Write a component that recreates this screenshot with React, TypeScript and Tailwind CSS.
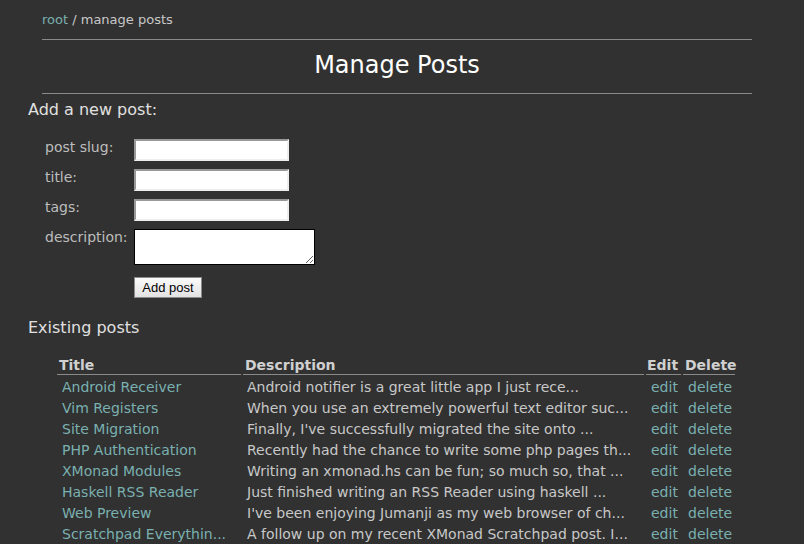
import React from "react";

const posts: [string, string][] = [
  ["Android Receiver", "Android notifier is a great little app I just rece..."],
  ["Vim Registers", "When you use an extremely powerful text editor suc..."],
  ["Site Migration", "Finally, I've successfully migrated the site onto ..."],
  ["PHP Authentication", "Recently had the chance to write some php pages th..."],
  ["XMonad Modules", "Writing an xmonad.hs can be fun; so much so, that ..."],
  ["Haskell RSS Reader", "Just finished writing an RSS Reader using haskell ..."],
  ["Web Preview", "I've been enjoying Jumanji as my web browser of ch..."],
  ["Scratchpad Everythin...", "A follow up on my recent XMonad Scratchpad post. I..."],
];

const inputCls =
  "w-[155px] h-[22px] bg-white border-2 border-t-[#999] border-l-[#999] border-b-[#eee] border-r-[#eee] outline-none";

export default function App() {
  return (
    <div
      className="min-h-screen bg-[#313131] px-[28px] text-[#c8c8c8]"
      style={{ fontFamily: '"DejaVu Sans", Verdana, sans-serif' }}
    >
      <div className="mx-[14px] w-[710px]">
        <div className="pt-[12px] text-[13px] leading-[16px]">
          <a className="text-[#7ab0b0]">root</a>
          <span className="text-[#c8c8c8]"> / manage posts</span>
        </div>
        <div className="mt-[11px] border-t border-[#8a8a8a]" />
        <h1 className="mt-[11px] text-center text-[24px] leading-[28px] text-white">Manage Posts</h1>
        <div className="mt-[14px] border-t border-[#8a8a8a]" />
      </div>

      <h2 className="mt-[6px] text-[16px] leading-[20px] text-[#e0e0e0]">Add a new post:</h2>

      <div className="mt-[19px] ml-[17px] grid grid-cols-[89px_auto] gap-y-[8px] text-[14px] leading-[17px] text-[#bdbdbd]">
        <span>post slug:</span>
        <input className={inputCls} />
        <span>title:</span>
        <input className={inputCls} />
        <span>tags:</span>
        <input className={inputCls} />
        <span>description:</span>
        <textarea className="w-[181px] h-[36px] bg-white border border-black resize-y outline-none" />
        <span />
        <div className="mt-[4px]">
          <button
            className="h-[21px] w-[68px] border border-[#8a8a8a] bg-gradient-to-b from-[#fbfbfb] to-[#e2e2e2] text-[13px] leading-[19px] text-black"
            style={{ fontFamily: '"Liberation Sans", Arial, sans-serif' }}
          >
            Add post
          </button>
        </div>
      </div>

      <h2 className="mt-[20px] text-[16px] leading-[20px] text-[#e0e0e0]">Existing posts</h2>

      <div className="mt-[19px] ml-[29px] grid grid-cols-[184px_401px_35px_52px] gap-x-[2px] text-[14px]">
        <div className="border-b border-[#8a8a8a] pl-[2px] font-bold leading-[17px] text-[#d0d0d0]">Title</div>
        <div className="border-b border-[#8a8a8a] pl-[2px] font-bold leading-[17px] text-[#d0d0d0]">Description</div>
        <div className="border-b border-[#8a8a8a] pl-[1px] font-bold leading-[17px] text-[#d0d0d0]">Edit</div>
        <div className="border-b border-[#8a8a8a] pl-[2px] font-bold leading-[17px] text-[#d0d0d0]">Delete</div>
        <div className="col-span-4 h-[2px]" />
        {posts.map(([t, d]) => (
          <React.Fragment key={t}>
            <div className="pl-[5px] leading-[21px] whitespace-nowrap text-[#7ab0b0]">{t}</div>
            <div className="pl-[4px] leading-[21px] whitespace-nowrap text-[#c8c8c8]">{d}</div>
            <div className="pl-[5px] leading-[21px] text-[#7ab0b0]">edit</div>
            <div className="pl-[5px] leading-[21px] text-[#7ab0b0]">delete</div>
          </React.Fragment>
        ))}
      </div>
    </div>
  );
}
